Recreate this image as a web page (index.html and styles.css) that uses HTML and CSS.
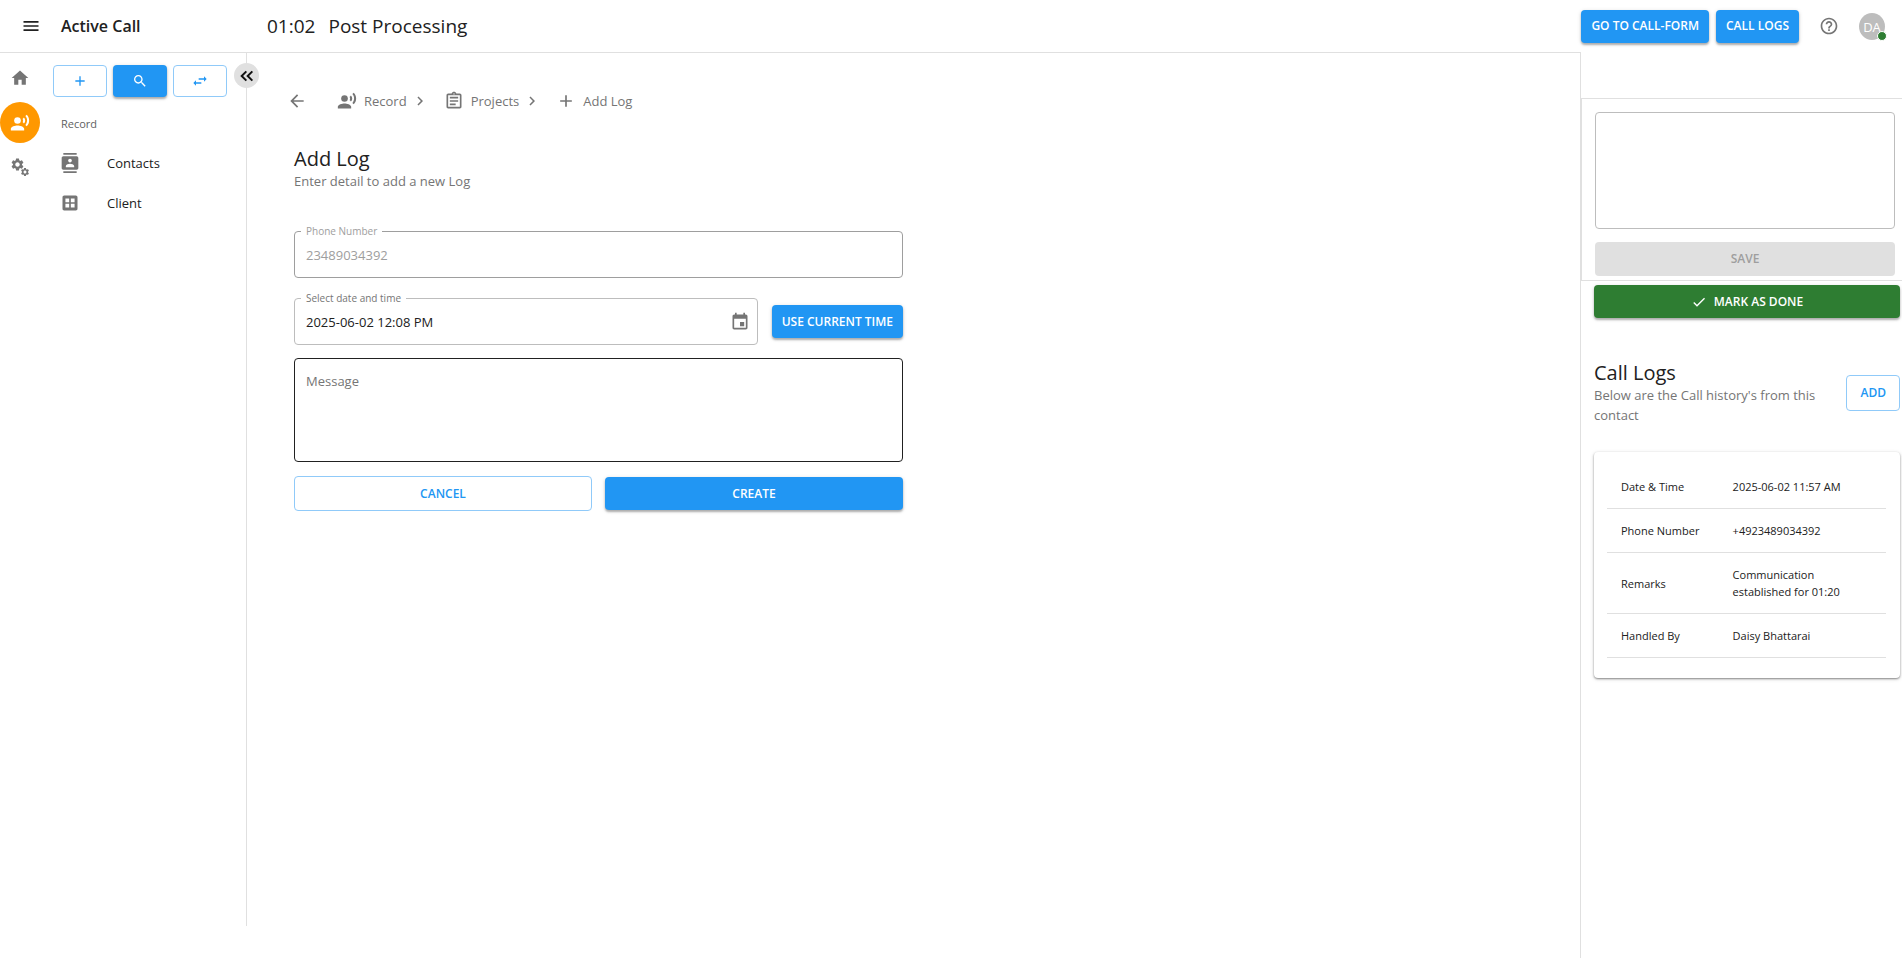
FILE: index.html
```html
<!DOCTYPE html>
<html lang="en">
<head>
<meta charset="utf-8">
<title>Active Call</title>
<link rel="stylesheet" href="styles.css">
</head>
<body>
<svg class="sprite" aria-hidden="true">
  <symbol id="menu" viewBox="0 0 24 24"><path d="M3 18h18v-2H3v2zm0-5h18v-2H3v2zm0-7v2h18V6H3z"/></symbol>
  <symbol id="home" viewBox="0 0 24 24"><path d="M10 20v-6h4v6h5v-8h3L12 3 2 12h3v8z"/></symbol>
  <symbol id="voice" viewBox="0 0 24 24"><circle cx="9" cy="9" r="4"/><path d="M9 15c-2.67 0-8 1.34-8 4v2h16v-2c0-2.66-5.33-4-8-4zm7.76-9.64l-1.68 1.69c.84 1.18.84 2.71 0 3.89l1.68 1.69c2.02-2.02 2.02-5.07 0-7.27zM20.07 2l-1.63 1.63c2.77 3.02 2.77 7.56 0 10.74L20.07 16c3.9-3.89 3.91-9.95 0-14z"/></symbol>
  <symbol id="gear" viewBox="0 0 24 24"><path fill-rule="evenodd" d="M19.14 12.94c.04-.3.06-.61.06-.94 0-.32-.02-.64-.07-.94l2.03-1.58c.18-.14.23-.41.12-.61l-1.92-3.32c-.12-.22-.37-.29-.59-.22l-2.39.96c-.5-.38-1.03-.7-1.62-.94l-.36-2.54c-.04-.24-.24-.41-.48-.41h-3.84c-.24 0-.43.17-.47.41l-.36 2.54c-.59.24-1.13.57-1.62.94l-2.39-.96c-.22-.08-.47 0-.59.22L2.74 8.87c-.12.21-.08.47.12.61l2.03 1.58c-.05.3-.09.63-.09.94s.02.64.07.94l-2.03 1.58c-.18.14-.23.41-.12.61l1.92 3.32c.12.22.37.29.59.22l2.39-.96c.5.38 1.03.7 1.62.94l.36 2.54c.05.24.24.41.48.41h3.84c.24 0 .44-.17.47-.41l.36-2.54c.59-.24 1.13-.56 1.62-.94l2.39.96c.22.08.47 0 .59-.22l1.92-3.32c.12-.22.07-.47-.12-.61l-2.01-1.58zM12 15.600c-1.980 0-3.600-1.620-3.600-3.600s1.620-3.600 3.600-3.600 3.600 1.620 3.600 3.600-1.620 3.600-3.600 3.600z"/></symbol>
  <symbol id="gears" viewBox="0 0 24 24"><use href="#gear" x="0" y="0" width="18" height="18"/><use href="#gear" x="12" y="12" width="12" height="12"/></symbol>
  <symbol id="contacts" viewBox="0 0 24 24"><path d="M20 0H4v2h16V0zM4 24h16v-2H4v2zM20 4H4c-1.1 0-2 .9-2 2v12c0 1.1.9 2 2 2h16c1.1 0 2-.9 2-2V6c0-1.1-.9-2-2-2zm-8 2.75c1.24 0 2.25 1.01 2.25 2.25s-1.01 2.25-2.25 2.25S9.75 10.24 9.75 9 10.76 6.75 12 6.75zM17 17H7v-1.5c0-1.67 3.33-2.5 5-2.5s5 .83 5 2.5V17z"/></symbol>
  <symbol id="client" viewBox="0 0 24 24"><path fill-rule="evenodd" d="M5 3h14c1.1 0 2 .9 2 2v14c0 1.1-.9 2-2 2H5c-1.1 0-2-.9-2-2V5c0-1.1.9-2 2-2zM6.500 6.500v4.500h4.500v-4.500zM13 6.500v4.500h4.500v-4.500zM6.500 13v4.500h4.500v-4.500zM13 13v4.500h4.500v-4.500z"/></symbol>
  <symbol id="search" viewBox="0 0 24 24"><path d="M15.5 14h-.79l-.28-.27C15.41 12.59 16 11.11 16 9.500 16 5.910 13.090 3 9.500 3S3 5.910 3 9.500 5.910 16 9.500 16c1.610 0 3.090-.590 4.230-1.570l.270.280v.790l5 4.990L20.490 19l-4.990-5zm-6 0C7.010 14 5 11.990 5 9.500S7.010 5 9.500 5 14 7.010 14 9.500 11.990 14 9.500 14z"/></symbol>
  <symbol id="swap" viewBox="0 0 24 24"><path d="M6 11L2 15l4 4v-3h8v-2H6v-3zM22 9l-4-4v3h-8v2h8v3L22 9z"/></symbol>
  <symbol id="collapse" viewBox="0 0 24 24"><path fill="none" stroke="currentColor" stroke-width="3" d="M11 5L4 12l7 7M20 5L13 12l7 7"/></symbol>
  <symbol id="back" viewBox="0 0 24 24"><path d="M20 11H7.830l5.590-5.590L12 4l-8 8 8 8 1.410-1.410L7.830 13H20v-2z"/></symbol>
  <symbol id="chevron" viewBox="0 0 24 24"><path d="M10 6L8.590 7.410 13.170 12l-4.580 4.590L10 18l6-6z"/></symbol>
  <symbol id="clipboard" viewBox="0 0 24 24"><path fill-rule="evenodd" d="M7 15h7v2H7zm0-4h10v2H7zm0-4h10v2H7zm12-4h-4.180C14.400 1.840 13.300 1 12 1c-1.300 0-2.400.840-2.820 2H5c-1.100 0-2 .9-2 2v14c0 1.100.9 2 2 2h14c1.100 0 2-.9 2-2V5c0-1.100-.9-2-2-2zm-7-.25c.410 0 .750.340.750.750s-.340.750-.750.750-.750-.340-.750-.750.340-.750.750-.750zM19 19H5V5h14v14z"/></symbol>
  <symbol id="add" viewBox="0 0 24 24"><path d="M19 13h-6v6h-2v-6H5v-2h6V5h2v6h6v2z"/></symbol>
  <symbol id="event" viewBox="0 0 24 24"><path d="M17 12h-5v5h5v-5zM16 1v2H8V1H6v2H5c-1.110 0-1.990.9-1.990 2L3 19c0 1.100.890 2 2 2h14c1.100 0 2-.9 2-2V5c0-1.100-.9-2-2-2h-1V1h-2zm3 18H5V8h14v11z"/></symbol>
  <symbol id="help" viewBox="0 0 24 24"><path d="M11 18h2v-2h-2v2zm1-16C6.480 2 2 6.480 2 12s4.480 10 10 10 10-4.480 10-10S17.520 2 12 2zm0 18c-4.410 0-8-3.590-8-8s3.590-8 8-8 8 3.590 8 8-3.590 8-8 8zm0-14c-2.210 0-4 1.790-4 4h2c0-1.100.9-2 2-2s2 .9 2 2c0 2-3 1.750-3 5h2c0-2.250 3-2.500 3-5 0-2.210-1.790-4-4-4z"/></symbol>
  <symbol id="check" viewBox="0 0 24 24"><path d="M9 16.170L4.830 12l-1.420 1.410L9 19 21 7l-1.410-1.410z"/></symbol>
</svg>

<header class="topbar">
  <div class="brand">
    <button class="icon-btn dark" aria-label="Menu"><svg class="icon"><use href="#menu"/></svg></button>
    <h1 class="brand-name">Active Call</h1>
  </div>
  <div class="status"><span>01:02</span><span>Post Processing</span></div>
  <div class="top-actions">
    <button class="btn solid">GO TO CALL-FORM</button>
    <button class="btn solid">CALL LOGS</button>
    <button class="icon-btn help" aria-label="Help"><svg class="icon"><use href="#help"/></svg></button>
    <div class="avatar">DA<span class="online"></span></div>
  </div>
</header>

<div class="shell">
  <div class="workspace">
    <nav class="rail" aria-label="Modules">
      <a class="rail-item" href="#" aria-label="Home"><svg class="icon"><use href="#home"/></svg></a>
      <a class="rail-item active" href="#" aria-label="Record"><svg class="icon"><use href="#voice"/></svg></a>
      <a class="rail-item" href="#" aria-label="Services"><svg class="icon"><use href="#gears"/></svg></a>
    </nav>
    <aside class="sidebar">
      <div class="side-tools">
        <button class="btn outline" aria-label="Add"><svg class="icon small"><use href="#add"/></svg></button>
        <button class="btn solid" aria-label="Search"><svg class="icon small"><use href="#search"/></svg></button>
        <button class="btn outline" aria-label="Swap"><svg class="icon small"><use href="#swap"/></svg></button>
      </div>
      <h2 class="side-title">Record</h2>
      <a class="side-link" href="#"><svg class="icon"><use href="#contacts"/></svg>Contacts</a>
      <a class="side-link" href="#"><svg class="icon"><use href="#client"/></svg>Client</a>
      <button class="collapse" aria-label="Collapse sidebar"><svg class="icon small"><use href="#collapse"/></svg></button>
    </aside>
    <main class="content">
      <nav class="crumbs" aria-label="Breadcrumb">
        <button class="icon-btn back" aria-label="Back"><svg class="icon"><use href="#back"/></svg></button>
        <a class="crumb" href="#"><svg class="icon"><use href="#voice"/></svg>Record</a>
        <svg class="icon sep"><use href="#chevron"/></svg>
        <a class="crumb" href="#"><svg class="icon"><use href="#clipboard"/></svg>Projects</a>
        <svg class="icon sep"><use href="#chevron"/></svg>
        <a class="crumb" href="#"><svg class="icon"><use href="#add"/></svg>Add Log</a>
      </nav>
      <form class="log-form">
        <div class="form-head">
          <h2 class="heading">Add Log</h2>
          <p class="sub">Enter detail to add a new Log</p>
        </div>
        <div class="field disabled">
          <label for="phone">Phone Number</label>
          <input id="phone" type="text" value="23489034392" disabled>
        </div>
        <div class="date-row">
          <div class="field">
            <label for="when">Select date and time</label>
            <input id="when" type="text" value="2025-06-02 12:08 PM">
            <button type="button" class="icon-btn" aria-label="Choose date"><svg class="icon"><use href="#event"/></svg></button>
          </div>
          <button type="button" class="btn solid">USE CURRENT TIME</button>
        </div>
        <textarea class="message" aria-label="Message" placeholder="Message"></textarea>
        <div class="form-actions">
          <button type="button" class="btn outline">CANCEL</button>
          <button type="button" class="btn solid">CREATE</button>
        </div>
      </form>
    </main>
  </div>

  <aside class="panel">
    <section class="note">
      <textarea class="note-text" aria-label="Note"></textarea>
      <button class="btn muted" disabled>SAVE</button>
    </section>
    <section class="history">
      <button class="btn done"><svg class="icon small"><use href="#check"/></svg>MARK AS DONE</button>
      <div class="history-head">
        <div>
          <h2 class="heading">Call Logs</h2>
          <p class="sub">Below are the Call history's from this contact</p>
        </div>
        <button class="btn outline">ADD</button>
      </div>
      <div class="card">
        <table class="log">
          <tr><th scope="row">Date &amp; Time</th><td>2025-06-02 11:57 AM</td></tr>
          <tr><th scope="row">Phone Number</th><td>+4923489034392</td></tr>
          <tr><th scope="row">Remarks</th><td>Communication established for 01:20</td></tr>
          <tr><th scope="row">Handled By</th><td>Daisy Bhattarai</td></tr>
        </table>
      </div>
    </section>
  </aside>
</div>
</body>
</html>
```
FILE: styles.css
```css
* { box-sizing: border-box; }

body {
  margin: 0;
  min-height: 100vh;
  display: flex;
  flex-direction: column;
  background: #fff;
  color: #212121;
  font: 12px/20px "Open Sans", "Noto Sans", sans-serif;
}

h1, h2, p { margin: 0; font-weight: 400; }
a { color: inherit; text-decoration: none; }
button, input, textarea { font: inherit; color: inherit; }
button { padding: 0; border: 0; background: none; }

.sprite { position: absolute; width: 0; height: 0; }
.icon { width: 20px; height: 20px; flex: none; display: block; fill: currentColor; }
.icon.small { width: 16px; height: 16px; }
.icon-btn { color: #757575; }
.icon-btn.dark { color: #212121; }

.btn {
  display: flex;
  align-items: center;
  justify-content: center;
  min-height: 33px;
  padding: 0 10px;
  border-radius: 4px;
  font-weight: 600;
  white-space: nowrap;
}
.solid { background: #2196f3; color: #fff; }
.solid, .done { box-shadow: 0 2px 2px rgba(0, 0, 0, .25), 0 1px 4px rgba(0, 0, 0, .15); }
.outline { border: 1px solid #90caf9; color: #2196f3; background: #fff; }
.muted { background: #e0e0e0; color: #9e9e9e; }
.done { background: #2e7d32; color: #fff; gap: 7px; }

.topbar { display: flex; align-items: center; height: 52px; padding-right: 17px; }
.brand { display: flex; align-items: center; gap: 20px; width: 267px; padding-left: 21px; }
.brand-name { font-size: 16px; font-weight: 600; }
.status { display: flex; gap: 13px; font-size: 19px; }
.top-actions { display: flex; align-items: center; gap: 7px; margin-left: auto; }
.help { margin: 0 13px; }
.avatar {
  position: relative;
  width: 26px;
  height: 27px;
  border-radius: 50%;
  background: #bdbdbd;
  color: #fff;
  font-size: 13px;
  line-height: 29px;
  text-align: center;
}
.online {
  position: absolute;
  right: -2px;
  bottom: -1px;
  width: 10px;
  height: 10px;
  border: 1px solid #fff;
  border-radius: 50%;
  background: #2e7d32;
}

.shell { flex: 1; display: flex; }
.workspace { flex: 1; display: flex; border-top: 1px solid #e0e0e0; }

.rail { width: 40px; padding-top: 5px; }
.rail-item {
  display: flex;
  align-items: center;
  justify-content: center;
  height: 40px;
  margin-bottom: 4px;
  border-radius: 50%;
  color: #757575;
}
.rail-item.active { height: 41px; background: #ff9800; color: #fff; }

.sidebar {
  position: relative;
  width: 207px;
  margin-bottom: 32px;
  padding: 12px 19px 0 13px;
  border-right: 1px solid #e0e0e0;
}
.side-tools { display: grid; grid-template-columns: repeat(3, 1fr); gap: 6px; }
.side-tools .btn { min-height: 32px; padding: 0; }
.side-title { padding: 17px 8px 9px; color: #616161; font-size: 11px; line-height: 20px; }
.side-link { display: flex; align-items: center; gap: 27px; height: 40px; padding-left: 7px; font-size: 13px; }
.side-link .icon { color: #757575; }
.collapse {
  position: absolute;
  top: 10px;
  right: -13px;
  width: 25px;
  height: 25px;
  display: grid;
  place-items: center;
  border-radius: 50%;
  background: #e0e0e0;
  color: #111;
}

.content { flex: 1; padding: 38px 40px; }
.crumbs { display: flex; align-items: center; color: #757575; }
.back { margin-right: 30px; }
.crumb { display: flex; align-items: center; gap: 7px; font-size: 13px; }
.icon.sep { width: 18px; height: 18px; margin: 0 15px 0 4px; }

.log-form { width: 609px; max-width: 100%; padding: 35px 0 0; margin-left: 7px; }
.heading { font-size: 20px; line-height: 25px; }
.sub { color: #757575; font-size: 13px; line-height: 20px; }
.form-head { margin-bottom: 40px; }

.field { position: relative; display: flex; align-items: center; flex: 1; height: 47px; padding: 0 7px 0 11px; border: 1px solid #bdbdbd; border-radius: 4px; }
.field label { position: absolute; top: -9px; left: 6px; padding: 0 5px; background: #fff; color: #757575; font-size: 10px; line-height: 16px; }
.field input { flex: 1; min-width: 0; padding: 0; border: 0; outline: 0; background: none; font-size: 13px; }
.field.disabled { border-color: #9e9e9e; }
.field.disabled label, .field.disabled input { color: #9e9e9e; }
.date-row { display: flex; align-items: center; gap: 14px; margin: 20px 0 13px; }
.message { display: block; width: 100%; height: 104px; padding: 12px 11px; border: 1px solid #212121; border-radius: 4px; resize: none; font-size: 13px; }
.message::placeholder { color: #757575; opacity: 1; }
.form-actions { display: grid; grid-template-columns: 1fr 1fr; align-items: center; gap: 13px; margin-top: 14px; }
.form-actions .outline { min-height: 35px; }

.panel { width: 322px; padding-top: 46px; border-left: 1px solid #e0e0e0; }
.note { padding: 13px 7px 4px 13px; border: solid #e0e0e0; border-width: 1px 0 1px 1px; }
.note-text { display: block; width: 100%; height: 117px; margin-bottom: 13px; border: 1px solid #bdbdbd; border-radius: 4px; resize: none; }
.note .btn { width: 100%; min-height: 34px; }
.history { padding: 4px 2px 0 13px; }
.history .done { width: 100%; }
.history-head { display: flex; align-items: center; justify-content: space-between; gap: 20px; margin: 42px 0 27px; }
.history-head .outline { min-height: 36px; padding: 0 13px; }
.card { padding: 13px 14px 20px 13px; border-radius: 4px; box-shadow: 0 1px 2px rgba(0, 0, 0, .4), 0 1px 4px rgba(0, 0, 0, .15); }
.log { width: 100%; border-collapse: collapse; font-size: 11px; line-height: 17px; }
.log th, .log td { padding: 13px 30px 13px 14px; border-bottom: 1px solid #e0e0e0; font-weight: 400; text-align: left; }
.log th { width: 40%; padding-right: 0; }
```
